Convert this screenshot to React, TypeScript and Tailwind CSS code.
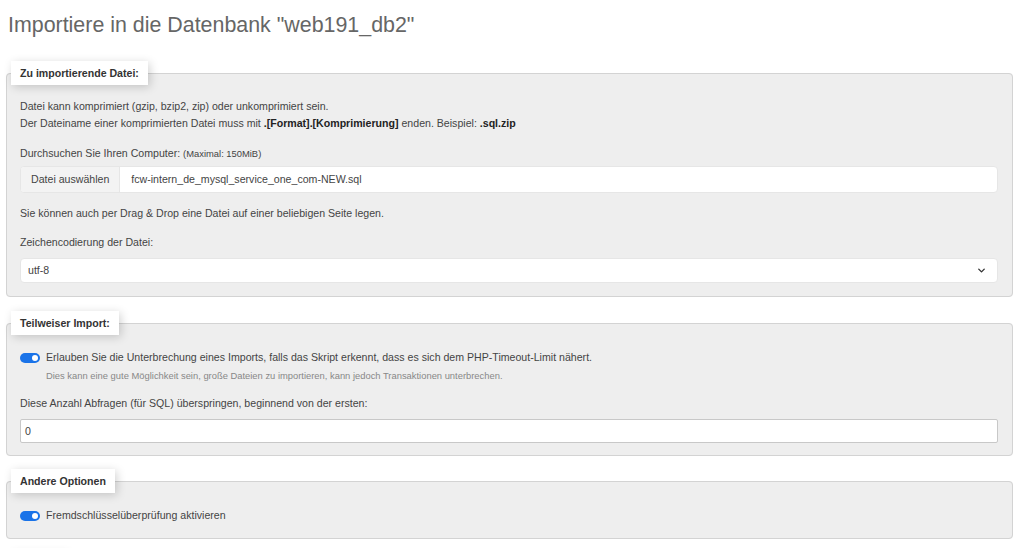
import { ChevronDown } from 'lucide-react';

function Toggle() {
  return (
    <span className="relative inline-flex h-[10px] w-[20px] shrink-0 items-center rounded-full bg-[#1a73e8]">
      <span className="absolute right-[2px] h-[6px] w-[6px] rounded-full bg-white" />
    </span>
  );
}

function Section({ title, children, className = '' }: { title: string; children: React.ReactNode; className?: string }) {
  return (
    <fieldset className={`rounded-[4px] border border-[#d3d3d3] bg-[#eeeeee] px-[4px] ${className}`}>
      <legend className="min-h-[24px] min-w-[56px] bg-white px-[9px] py-[5px] text-[10.6px] font-bold leading-[14px] text-[#333] shadow-[2px_2px_10px_rgba(0,0,0,0.18)]">
        {title}
      </legend>
      <div className="pl-[9px] pr-[10px]">{children}</div>
    </fieldset>
  );
}

export default function App() {
  return (
    <div
      className="h-[548px] overflow-hidden bg-white text-[10.6px] leading-[17px] text-[#444]"
      style={{ fontFamily: '"Liberation Sans", Arial, sans-serif' }}
    >
      <h1 className="pl-[8px] pt-[12px] text-[21.4px] font-normal leading-[26px] text-[#666]">
        Importiere in die Datenbank "web191_db2"
      </h1>

      <div className="ml-[6px] mr-[11px] mt-[23px] flex flex-col">
        <Section title="Zu importierende Datei:" className="pt-[13px] pb-[13px]">
          <p>Datei kann komprimiert (gzip, bzip2, zip) oder unkomprimiert sein.</p>
          <p>
            Der Dateiname einer komprimierten Datei muss mit <b className="text-[#222]">.[Format].[Komprimierung]</b> enden. Beispiel:{' '}
            <b className="text-[#222]">.sql.zip</b>
          </p>

          <p className="mt-[13px]">
            Durchsuchen Sie Ihren Computer: <span className="text-[9.4px]">(Maximal: 150MiB)</span>
          </p>
          <div className="mt-[4px] flex h-[27px] items-stretch overflow-hidden rounded-[4px] border border-[#e6e6e6] bg-white">
            <span className="flex items-center border-r border-[#e6e6e6] bg-[#f3f3f3] px-[10px]">Datei auswählen</span>
            <span className="flex items-center pl-[11px]">fcw-intern_de_mysql_service_one_com-NEW.sql</span>
          </div>

          <p className="mt-[12px]">Sie können auch per Drag &amp; Drop eine Datei auf einer beliebigen Seite legen.</p>

          <p className="mt-[12px]">Zeichencodierung der Datei:</p>
          <div className="mt-[7px] flex h-[25px] items-center justify-between rounded-[4px] border border-[#e6e6e6] bg-white pl-[7px] pr-[10px]">
            <span>utf-8</span>
            <ChevronDown className="h-[11px] w-[11px] text-[#333]" strokeWidth={3} />
          </div>
        </Section>

        <Section title="Teilweiser Import:" className="mt-[14px] pt-[14px] pb-[12px]">
          <div className="flex items-center gap-[6px]">
            <Toggle />
            <span>Erlauben Sie die Unterbrechung eines Imports, falls das Skript erkennt, dass es sich dem PHP-Timeout-Limit nähert.</span>
          </div>
          <p className="mt-[3px] pl-[26px] text-[9.4px] leading-[14px] text-[#888]">
            Dies kann eine gute Möglichkeit sein, große Dateien zu importieren, kann jedoch Transaktionen unterbrechen.
          </p>

          <p className="mt-[12px]">Diese Anzahl Abfragen (für SQL) überspringen, beginnend von der ersten:</p>
          <div className="mt-[7px] flex h-[24px] items-center rounded-[2px] border border-[#c8c8c8] bg-white pl-[4px]">
            0
          </div>
        </Section>

        <Section title="Andere Optionen" className="mt-[13px] pt-[14px] pb-[14px]">
          <div className="flex items-center gap-[6px]">
            <Toggle />
            <span>Fremdschlüsselüberprüfung aktivieren</span>
          </div>
        </Section>

        <Section title="" className="mt-[13px] pt-[13px] pb-[13px]">
          <div className="h-[40px]" />
        </Section>
      </div>
    </div>
  );
}
